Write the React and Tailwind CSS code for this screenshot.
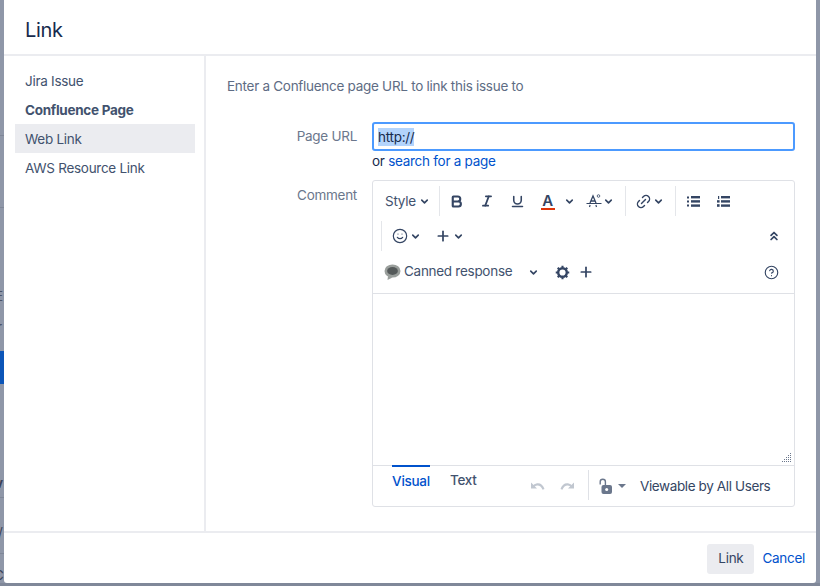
import React from "react";
import {
  Bold,
  ChevronDown,
  ChevronsUp,
  CircleHelp,
  Italic,
  Link2,
  Plus,
  Smile,
  Underline,
} from "lucide-react";

const navy = "#344563";

const Chevron = ({ className = "" }) => (
  <ChevronDown size={11} strokeWidth={3.5} color={navy} className={`shrink-0 ${className}`} />
);

const Cell = ({ w, children }) => (
  <div className={`flex items-center justify-center shrink-0 h-full ${w}`}>{children}</div>
);

const Divider = () => <div className="w-px h-[30px] bg-[#e4e6ea] shrink-0" />;

const Gear = () => (
  <svg width="15" height="15" viewBox="0 0 16 16" fill="none" stroke={navy}>
    <circle cx="8" cy="8" r="4.6" strokeWidth="2.6" />
    <path d="M8 0.8v2M8 13.2v2M0.8 8h2M13.2 8h2M2.9 2.9l1.4 1.4M11.7 11.7l1.4 1.4M2.9 13.1l1.4-1.4M11.7 4.3l1.4-1.4" strokeWidth="2.2" />
  </svg>
);

const SpeechBubble = () => (
  <svg width="17" height="17" viewBox="0 0 17 17">
    <ellipse cx="8.5" cy="7" rx="8" ry="6.6" fill="#9a9f9c" />
    <ellipse cx="8.5" cy="7" rx="5.4" ry="3.9" fill="#555a5a" />
    <path d="M4 12l-0.5 4L8.5 13.4z" fill="#9a9f9c" />
  </svg>
);

const Subscript = () => (
  <svg width="16" height="14" viewBox="0 0 16 14" fill="none" stroke={navy}>
    <path d="M4 9L7 2l3 7M5 7h4" strokeWidth="1.3" />
    <path d="M0.5 9.5h15" strokeWidth="1" />
    <path d="M3.5 13l0.6-2M10.5 13l-0.6-2" strokeWidth="1.2" />
    <circle cx="12.5" cy="2" r="1.3" strokeWidth="0.8" />
  </svg>
);

const BulletList = () => (
  <svg width="13" height="11" viewBox="0 0 13 11" fill={navy}>
    <rect x="0" y="0.5" width="2" height="2" />
    <rect x="0" y="4.5" width="2" height="2" />
    <rect x="0" y="8.5" width="2" height="2" />
    <rect x="4" y="0" width="9" height="2.4" />
    <rect x="4" y="4.2" width="9" height="2.4" />
    <rect x="4" y="8.4" width="9" height="2.4" />
  </svg>
);

const NumberList = () => (
  <svg width="13" height="11" viewBox="0 0 13 11" fill={navy}>
    <rect x="1" y="0" width="1.2" height="3" />
    <rect x="0" y="4.2" width="2.6" height="2.4" />
    <rect x="0" y="8.2" width="2.6" height="2.6" />
    <rect x="4" y="0" width="9" height="2.4" />
    <rect x="4" y="4.2" width="9" height="2.4" />
    <rect x="4" y="8.4" width="9" height="2.4" />
  </svg>
);

const OpenLock = () => (
  <svg width="14" height="17" viewBox="0 0 14 17" fill="none">
    <path d="M1.2 6.5V3.8a2.6 2.6 0 0 1 5.2 0V7" stroke="#6b778c" strokeWidth="1.4" />
    <rect x="2.5" y="7" width="10.5" height="9" rx="2" fill="#6b778c" />
    <circle cx="7.7" cy="11.5" r="1.5" fill="#fff" />
  </svg>
);

const ArcLeft = () => (
  <svg width="15" height="11" viewBox="0 0 15 11" fill="#c1c7d0">
    <path d="M1 1.5v6h6L4.8 5.3C7.6 3.6 11 4.6 12.6 8.8l1.9-.8C12.6 2.4 8 .8 3.6 3.9z" />
  </svg>
);

const ArcRight = () => (
  <svg width="15" height="11" viewBox="0 0 15 11" fill="#c1c7d0">
    <path d="M14 1.5v6H8l2.2-2.2C7.4 3.6 4 4.6 2.4 8.8L.5 8C2.4 2.4 7 .8 11.4 3.9z" />
  </svg>
);

const NavItem = ({ label, bold, active }) => (
  <div
    className={`h-[29px] flex items-center pl-[10px] pt-[2px] text-[#42526e] ${bold ? "font-bold" : ""} ${active ? "bg-[#ebecf0]" : ""}`}
  >
    {label}
  </div>
);

export default function App() {
  return (
    <div
      className="relative w-[820px] h-[586px] overflow-hidden bg-[#8f97a8] text-[13.5px] tracking-[-0.28px]"
      style={{ fontFamily: "Inter, 'Liberation Sans', sans-serif" }}
    >
      {/* page behind the overlay */}
      <div className="absolute left-0 top-[351px] w-[4px] h-[33px] bg-[#0c55b8]" />
      <div className="absolute left-0 top-[135px] w-[4px] h-px bg-[#7f8798]" />
      <div className="absolute left-0 top-[207px] w-[4px] h-px bg-[#7f8798]" />
      <div className="absolute left-0 top-[497px] w-[4px] h-px bg-[#7f8798]" />
      <div className="absolute left-0 top-[553px] w-[4px] h-px bg-[#7f8798]" />
      <div className="absolute left-0 bottom-0 w-full h-[3px] bg-[#808899]" />
      <span className="absolute left-[-5px] top-[288px] text-[#4a5266] leading-4">E</span>
      <span className="absolute left-[-3px] top-[319px] text-[#4a5266] leading-4">r</span>
      <span className="absolute left-[-5px] top-[475px] font-bold text-[#3a4258] leading-4">v</span>
      <span className="absolute left-[-2px] top-[524px] text-[#3a4258] leading-4">/</span>
      <span className="absolute left-[-6px] top-[567px] text-[#3a4258] leading-4">C</span>

      <div className="absolute left-[4px] top-0 w-[812px] h-[583px] bg-white rounded-b-[3px] flex flex-col text-[#172b4d]">
        <div className="h-[56px] shrink-0 border-b-2 border-[#ebecf0] flex items-center pl-[21px] pt-[6px] text-[20px] leading-none tracking-[-0.3px]">
          Link
        </div>

        <div className="flex flex-1 min-h-0">
          <div className="w-[202px] shrink-0 border-r-2 border-[#ebecf0] pt-[10px] pl-[11px] pr-[9px]">
            <NavItem label="Jira Issue" />
            <NavItem label="Confluence Page" bold />
            <NavItem label="Web Link" active />
            <NavItem label="AWS Resource Link" />
          </div>

          <div className="flex-1 min-w-0 pl-[21px] pr-[21px] pt-[20px]">
            <div className="h-[20px] leading-[20px] text-[#5e6c84]">
              Enter a Confluence page URL to link this issue to
            </div>

            <div className="flex mt-[26px]">
              <div className="w-[130px] shrink-0 text-right text-[#6b778c] pt-[4px] leading-[20px]">Page URL</div>
              <div className="ml-[15px] w-[423px]">
                <div className="h-[29px] border-2 border-[#4c9aff] rounded-[3px] flex items-center pl-[4px]">
                  <span className="bg-[#b3d4fc] leading-[18px]">http://</span>
                </div>
                <div className="leading-[20px]">
                  or <span className="text-[#0052cc]">search for a page</span>
                </div>
              </div>
            </div>

            <div className="flex mt-[9px]">
              <div className="w-[130px] shrink-0 text-right text-[#6b778c] pt-[5px] leading-[20px]">Comment</div>
              <div className="ml-[15px] w-[423px] h-[327px] border border-[#dfe1e6] rounded-[3px] flex flex-col">
                <div className="h-[113px] shrink-0 border-b border-[#dfe1e6] text-[#42526e]">
                  <div className="flex items-center h-[30px] mt-[5px] pl-[12px]">
                    <div className="w-[54px] flex items-center gap-[3px] shrink-0">
                      <span>Style</span>
                      <Chevron />
                    </div>
                    <Divider />
                    <Cell w="w-[32px]"><Bold size={15} strokeWidth={3.4} color={navy} /></Cell>
                    <Cell w="w-[30px]"><Italic size={14} strokeWidth={3} color={navy} /></Cell>
                    <Cell w="w-[30px]"><Underline size={15} strokeWidth={2.5} color={navy} /></Cell>
                    <Cell w="w-[31px]">
                      <div className="flex flex-col items-center">
                        <span className="text-[15px] leading-[15px] font-semibold text-[#344563]">A</span>
                        <span className="w-[14px] h-[2px] bg-[#de350b]" />
                      </div>
                    </Cell>
                    <Cell w="w-[12px]"><Chevron /></Cell>
                    <div className="ml-[11px] flex shrink-0"><Subscript /></div>
                    <Cell w="w-[12px]"><Chevron /></Cell>
                    <div className="w-[11px] shrink-0" />
                    <Divider />
                    <div className="ml-[9px] flex shrink-0"><Link2 size={17} strokeWidth={2} color={navy} className="-rotate-45" /></div>
                    <Cell w="w-[12px]"><Chevron /></Cell>
                    <div className="w-[11px] shrink-0" />
                    <Divider />
                    <Cell w="w-[34px]"><BulletList /></Cell>
                    <Cell w="w-[26px]"><NumberList /></Cell>
                  </div>

                  <div className="flex items-center h-[30px] mt-[5px] pl-[8px]">
                    <Divider />
                    <div className="ml-[10px] flex shrink-0"><Smile size={16} strokeWidth={1.8} color={navy} /></div>
                    <Cell w="w-[14px]"><Chevron /></Cell>
                    <div className="ml-[13px] flex shrink-0"><Plus size={16} strokeWidth={2.6} color={navy} /></div>
                    <Cell w="w-[14px]"><Chevron /></Cell>
                    <div className="ml-auto mr-[13px]"><ChevronsUp size={14} strokeWidth={3} color={navy} /></div>
                  </div>

                  <div className="flex items-center h-[20px] mt-[11px] pl-[11px]">
                    <SpeechBubble />
                    <span className="ml-[3px] w-[124px] shrink-0 leading-none">Canned response</span>
                    <Chevron />
                    <Cell w="w-[46px]"><Gear /></Cell>
                    <div className="ml-[-7px] flex"><Plus size={16} strokeWidth={2.6} color={navy} /></div>
                    <div className="ml-auto mr-[15px] flex"><CircleHelp size={15} strokeWidth={1.8} color={navy} /></div>
                  </div>
                </div>

                <div className="flex-1 relative">
                  <svg className="absolute right-[2px] bottom-[2px]" width="10" height="10" viewBox="0 0 10 10" fill="#6b778c">
                    <rect x="8" y="0" width="1" height="1" />
                    <rect x="6" y="2" width="1" height="1" />
                    <rect x="8" y="2" width="1" height="1" />
                    <rect x="4" y="4" width="1" height="1" />
                    <rect x="6" y="4" width="1" height="1" />
                    <rect x="8" y="4" width="1" height="1" />
                    <rect x="2" y="6" width="1" height="1" />
                    <rect x="4" y="6" width="1" height="1" />
                    <rect x="6" y="6" width="1" height="1" />
                    <rect x="8" y="6" width="1" height="1" />
                    <rect x="0" y="8" width="1" height="1" />
                    <rect x="2" y="8" width="1" height="1" />
                    <rect x="4" y="8" width="1" height="1" />
                    <rect x="6" y="8" width="1" height="1" />
                    <rect x="8" y="8" width="1" height="1" />
                  </svg>
                </div>

                <div className="h-[41px] shrink-0 border-t border-[#dfe1e6] flex pl-[19px]">
                  <div className="w-[38px] -mt-px border-t-2 border-[#0052cc] text-[#0052cc] font-medium pt-[4px] leading-[20px] h-fit text-center">
                    Visual
                  </div>
                  <div className="ml-[20px] w-[30px] text-[#42526e] font-medium pt-[4px] leading-[20px] h-fit">Text</div>
                  <div className="flex items-center ml-[50px] gap-[15px] mt-[5px] h-[30px]">
                    <ArcLeft />
                    <ArcRight />
                  </div>
                  <div className="ml-[13px] mt-[4px] w-px h-[30px] bg-[#dfe1e6]" />
                  <div className="flex items-center ml-[10px] mt-[5px] h-[30px]">
                    <OpenLock />
                    <span className="ml-[5px] w-0 h-0 border-x-[4px] border-x-transparent border-t-[4px] border-t-[#6b778c]" />
                    <span className="ml-[14px] text-[#344563] tracking-[-0.38px]">Viewable by All Users</span>
                  </div>
                </div>
              </div>
            </div>
          </div>
        </div>

        <div className="h-[52px] shrink-0 border-t-2 border-[#ebecf0] flex items-center justify-end pr-[11px] pt-[1px]">
          <div className="h-[30px] w-[47px] rounded-[3px] bg-[#ebecf0] flex items-center justify-center text-[#344563]">Link</div>
          <span className="ml-[8px] text-[#0052cc]">Cancel</span>
        </div>
      </div>
    </div>
  );
}
